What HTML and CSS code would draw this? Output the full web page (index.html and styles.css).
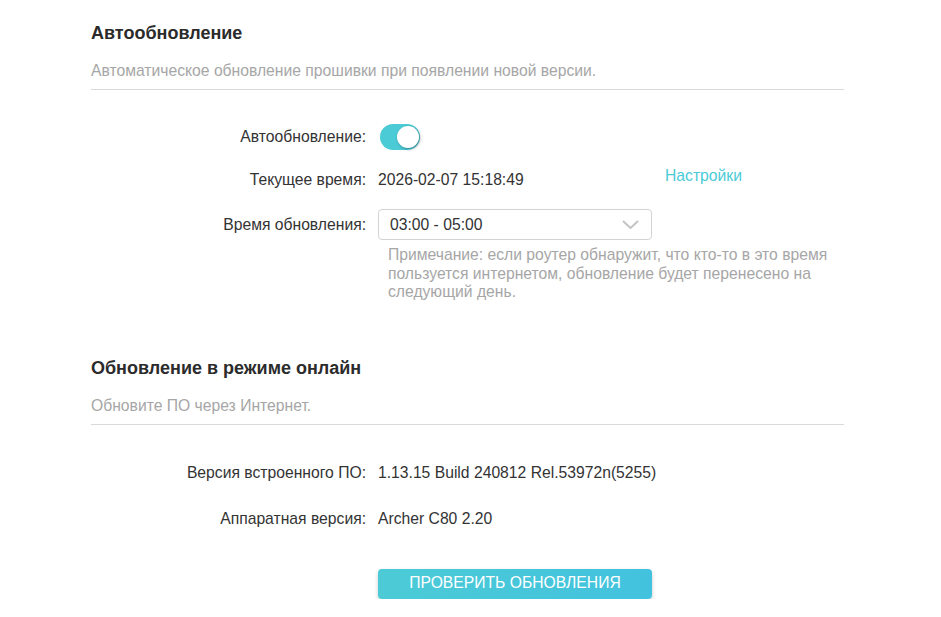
FILE: index.html
```html
<!DOCTYPE html>
<html lang="ru">
<head>
<meta charset="utf-8">
<title>Обновление</title>
<link rel="stylesheet" href="styles.css">
</head>
<body>
<div class="page">
  <section class="section first">
    <div class="head">
      <h2 class="title">Автообновление</h2>
      <p class="subtitle">Автоматическое обновление прошивки при появлении новой версии.</p>
    </div>
    <div class="form">
      <div class="row row-toggle">
        <div class="label">Автообновление:</div>
        <div class="value">
          <span class="toggle on"><span class="knob"></span></span>
        </div>
      </div>
      <div class="row row-time">
        <div class="label">Текущее время:</div>
        <div class="value">
          <span class="fixed">2026-02-07 15:18:49</span>
          <a class="link" href="#">Настройки</a>
        </div>
      </div>
      <div class="row row-select">
        <div class="label">Время обновления:</div>
        <div class="value">
          <div class="select">
            <span>03:00 - 05:00</span>
            <svg class="chev" width="17" height="10" viewBox="0 0 17 10"><path d="M1.5 1.5 L8.5 8 L15.5 1.5" fill="none" stroke="#c4c4c4" stroke-width="2" stroke-linecap="round" stroke-linejoin="round"/></svg>
          </div>
        </div>
      </div>
      <div class="row row-note">
        <div class="label"></div>
        <div class="value">
          <p class="note">Примечание: если роутер обнаружит, что кто-то в это время пользуется интернетом, обновление будет перенесено на следующий день.</p>
        </div>
      </div>
    </div>
  </section>

  <section class="section second">
    <div class="head">
      <h2 class="title">Обновление в режиме онлайн</h2>
      <p class="subtitle">Обновите ПО через Интернет.</p>
    </div>
    <div class="form">
      <div class="row row-fw">
        <div class="label">Версия встроенного ПО:</div>
        <div class="value">1.13.15 Build 240812 Rel.53972n(5255)</div>
      </div>
      <div class="row row-hw">
        <div class="label">Аппаратная версия:</div>
        <div class="value">Archer C80 2.20</div>
      </div>
      <div class="row row-btn">
        <div class="label"></div>
        <div class="value">
          <button class="btn" type="button">ПРОВЕРИТЬ ОБНОВЛЕНИЯ</button>
        </div>
      </div>
    </div>
  </section>
</div>
</body>
</html>
```

FILE: styles.css
```css
* { box-sizing: border-box; }
html, body { margin: 0; padding: 0; background: #fff; }
body {
  font-family: "Liberation Sans", Arial, sans-serif;
  color: #333;
  font-size: 15.7px;
}
.page {
  width: 753px;
  margin-left: 91px;
}
.head {
  border-bottom: 1px solid #d9d9d9;
  padding-bottom: 8px;
}
.title {
  margin: 0;
  font-size: 18px;
  line-height: 24px;
  font-weight: bold;
  color: #2b2b2b;
}
.subtitle {
  margin: 16px 0 0;
  font-size: 15.7px;
  line-height: 20px;
  color: #a6a6a6;
}
.section.first { padding-top: 21px; }
.section.second { padding-top: 54px; }

.row {
  display: grid;
  grid-template-columns: 275px 1fr;
  column-gap: 12px;
  align-items: center;
}
.label {
  text-align: right;
  font-size: 15.7px;
  line-height: 20px;
  color: #333;
}
.value {
  font-size: 15.7px;
  line-height: 20px;
  color: #333;
  display: flex;
  align-items: center;
}
.row-toggle { margin-top: 34px; height: 26px; }
.row-time { margin-top: 20px; }
.row-select { margin-top: 19px; }
.row-note { margin-top: 6px; align-items: start; }
.row-fw { margin-top: 38px; }
.row-hw { margin-top: 26px; }
.row-btn { margin-top: 40px; }

.toggle {
  display: inline-block;
  position: relative;
  width: 40px;
  height: 26px;
  margin-left: 2px;
  border-radius: 13px;
  background: #4acbd6;
}
.toggle .knob {
  position: absolute;
  right: 1px;
  top: 2px;
  width: 22px;
  height: 22px;
  border-radius: 50%;
  background: #fff;
  box-shadow: 1px 1px 3px rgba(0,0,0,0.35);
}
.fixed { display: inline-block; width: 287px; }
.link {
  color: #4acbd6;
  text-decoration: none;
  font-size: 15.7px;
  position: relative;
  top: -4px;
}
.select {
  width: 274px;
  height: 31px;
  border: 1px solid #d3d3d3;
  border-radius: 4px;
  display: flex;
  align-items: center;
  justify-content: space-between;
  padding: 0 12px 0 11px;
  font-size: 15.7px;
  color: #333;
}
.chev { display: block; margin-top: 1px; }
.note {
  margin: 0 0 0 10px;
  font-size: 15.7px;
  line-height: 18.5px;
  color: #a6a6a6;
  max-width: 450px;
}
.btn {
  width: 274px;
  height: 30px;
  border: none;
  border-radius: 4px;
  background: linear-gradient(to right, #4ccbd6, #42c2de);
  color: #fff;
  font-family: "Liberation Sans", Arial, sans-serif;
  font-size: 15.7px;
  line-height: 28px;
  box-shadow: 0 2px 4px rgba(0,0,0,0.2);
  padding: 0 0 2px;
  cursor: pointer;
}
```
